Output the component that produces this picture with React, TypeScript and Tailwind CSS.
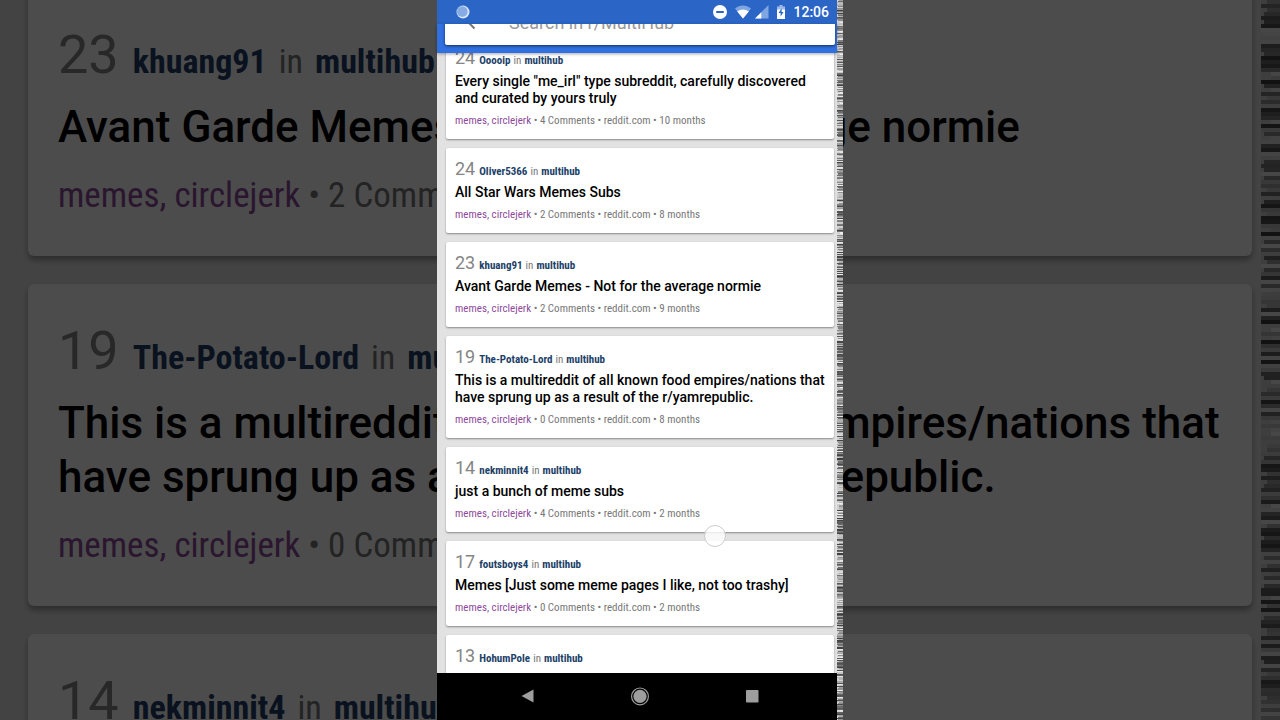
import React from 'react';
import clsx from 'clsx';

type Post = {
  id: number;
  score: number;
  author: string;
  title: string;
  comments: number;
  age: string;
};

const posts: Post[] = [
  { id: 1, score: 24, author: 'Ooooip', title: 'Every single "me_irl" type subreddit, carefully discovered and curated by yours truly', comments: 4, age: '10 months' },
  { id: 2, score: 24, author: 'Oliver5366', title: 'All Star Wars Memes Subs', comments: 2, age: '8 months' },
  { id: 3, score: 23, author: 'khuang91', title: 'Avant Garde Memes - Not for the average normie', comments: 2, age: '9 months' },
  { id: 4, score: 19, author: 'The-Potato-Lord', title: 'This is a multireddit of all known food empires/nations that have sprung up as a result of the r/yamrepublic.', comments: 0, age: '8 months' },
  { id: 5, score: 14, author: 'nekminnit4', title: 'just a bunch of meme subs', comments: 4, age: '2 months' },
  { id: 6, score: 17, author: 'foutsboys4', title: 'Memes [Just some meme pages I like, not too trashy]', comments: 0, age: '2 months' },
  { id: 7, score: 13, author: 'HohumPole', title: '', comments: 0, age: '' },
];

const narrow = "font-['Roboto_Condensed','Liberation_Sans_Narrow',Roboto,sans-serif]";

const PostCard: React.FC<{ post: Post; large?: boolean }> = ({ post, large }) => (
  <article
    className={clsx(
      'shrink-0 bg-white',
      large
        ? 'min-h-[268px] rounded-md pt-8 pr-6 pb-9 pl-[30px] shadow-[0_4px_6px_rgba(0,0,0,0.35)]'
        : 'min-h-[85px] rounded-xs px-[9px] pt-2.5 pb-[11px] shadow-[0_1px_2px_rgba(0,0,0,0.4)]'
    )}
  >
    <div className={clsx('flex items-baseline whitespace-nowrap', large ? 'h-[70px] gap-3.5 leading-[70px]' : 'h-[22px] gap-1 leading-[22px]')}>
      <span className={clsx('text-[#858585]', large ? 'text-[54px]' : 'text-[18px]')}>{post.score}</span>
      <span className={clsx(narrow, 'flex items-baseline text-[#777]', large ? 'gap-3 text-[34px]' : 'gap-[3px] text-[11px]')}>
        <b className="text-[#223f68]">{post.author}</b>
        <span>in</span>
        <b className="text-[#223f68]">multihub</b>
      </span>
    </div>
    {post.title && (
      <>
        <h2 className={clsx('font-medium text-black', large ? 'mt-2.5 text-[44px] leading-[54px]' : 'mt-1 text-[14px] leading-[17px]')}>
          {post.title}
        </h2>
        <p className={clsx(narrow, 'whitespace-nowrap text-[#777]', large ? 'mt-[18px] text-[35px] leading-[48px]' : 'mt-1.5 text-[11px] leading-[15px]')}>
          <span className="text-[#8e4a9a]">memes, circlejerk</span> • {post.comments} Comments • reddit.com • {post.age}
        </p>
      </>
    )}
  </article>
);

// Torn column of horizontal scan lines along the edge of the recording
const Static: React.FC<{ className: string; step: number }> = ({ className, step }) => {
  const bars = Array.from({ length: Math.ceil(720 / step) }, (_, i) => {
    const n = Math.abs(Math.sin(i * 12.9898 + step) * 43758.5453) % 1;
    const m = Math.abs(Math.sin(i * 78.233 + step) * 12543.123) % 1;
    return { y: i * step, x: m > 0.6 ? Math.floor(n * 4) : 0, shade: Math.floor(n * 180 + 60) };
  });
  return (
    <svg className={className} viewBox="0 0 6 720" preserveAspectRatio="none" shapeRendering="crispEdges" aria-hidden="true">
      <rect width="6" height="720" fill="#d0d0d0" />
      {bars.map((b) => (
        <rect key={b.y} x={b.x} y={b.y} width={6 - b.x} height={step} fill={`rgb(${b.shade},${b.shade},${b.shade})`} />
      ))}
    </svg>
  );
};

const StatusBar: React.FC = () => (
  <div className="flex h-6 shrink-0 items-center bg-[#2b66c7] pr-2 pl-[19px] text-white">
    <svg className="h-3.5 w-3.5" viewBox="0 0 14 14" aria-hidden="true">
      <circle cx="7" cy="7" r="6.5" fill="#d9e6f8" />
      <circle cx="6.3" cy="6.5" r="5.3" fill="#86abe4" />
    </svg>
    <svg className="ml-auto h-3.5 w-3.5" viewBox="0 0 14 14" aria-hidden="true">
      <circle cx="7" cy="7" r="7" fill="#fff" />
      <rect x="3.2" y="6" width="7.6" height="2" fill="#2b66c7" />
    </svg>
    <svg className="ml-2 h-3.5 w-4" viewBox="0 0 16 14" aria-hidden="true">
      <path d="M0 3.6C4.7-.4 11.3-.4 16 3.6L8 13.5z" fill="#7fa6e2" />
      <path d="M2.2 6.6c3.4-2.8 8.2-2.8 11.6 0L8 13.5z" fill="#fff" />
    </svg>
    <svg className="ml-1 h-3.5 w-3.5" viewBox="0 0 14 14" aria-hidden="true">
      <path d="M13.5 0v13.5H0z" fill="#7fa6e2" />
      <path d="M6.3 7.2v6.3H0z" fill="#fff" />
    </svg>
    <svg className="ml-2 h-3.5 w-2" viewBox="0 0 8 14" aria-hidden="true">
      <path d="M2.5 0h3v1.5H8V5H0V1.5h2.5z" fill="#9dbbea" />
      <path d="M0 4.5h8V14H0z" fill="#fff" />
      <path d="M4.6 3.2 1.6 8h2v3.6L6.6 7h-2z" fill="#2b66c7" />
    </svg>
    <span className="ml-2 text-[14px] leading-6 font-medium">12:06</span>
  </div>
);

const SearchBar: React.FC = () => (
  <div className="z-10 h-[29px] shrink-0 overflow-hidden bg-[#3070e0] pr-0.5 pl-2 shadow-[0_1px_3px_rgba(0,0,0,0.35)]">
    <form className="-mt-[27px] flex h-12 items-center rounded-xs bg-white pl-4 shadow-[0_1px_3px_rgba(0,0,0,0.6)]">
      <button type="button" aria-label="Back" className="text-[#777]">
        <svg className="h-6 w-6" viewBox="0 0 24 24" fill="none" stroke="currentColor" strokeWidth="2">
          <path d="M20 11H5M12.5 3.5 5 11l8.5 8.5" />
        </svg>
      </button>
      <input
        type="text"
        aria-label="Search"
        placeholder="Search in r/MultiHub"
        className="ml-6 h-12 min-w-0 flex-1 bg-transparent pt-0.5 text-[18px] outline-none placeholder:text-[#999]"
      />
    </form>
  </div>
);

const NavBar: React.FC = () => (
  <nav className="flex h-[47px] shrink-0 items-center justify-center gap-22 bg-black pl-1.5 text-[#9e9e9e]">
    <button type="button" aria-label="Back">
      <svg className="h-6 w-6" viewBox="0 0 24 24" fill="currentColor">
        <path d="M17.5 4.5v13l-12-6.5z" />
      </svg>
    </button>
    <button type="button" aria-label="Home">
      <svg className="h-6 w-6" viewBox="0 0 24 24" fill="currentColor">
        <circle cx="12" cy="11.4" r="6.6" />
        <circle cx="12" cy="11.4" r="8.4" fill="none" stroke="currentColor" strokeWidth="1.2" />
      </svg>
    </button>
    <button type="button" aria-label="Recent apps">
      <svg className="h-6 w-6" viewBox="0 0 24 24" fill="currentColor">
        <rect x="6" y="5" width="12.5" height="12.5" rx=".8" />
      </svg>
    </button>
  </nav>
);

const App: React.FC = () => (
  <div className="relative flex h-screen justify-center overflow-hidden bg-black font-[Roboto,sans-serif]">
    {/* Dimmed enlargement behind the phone */}
    <div className="absolute inset-0 flex overflow-hidden bg-[#e2e2e2]" aria-hidden="true">
      <div className="-mt-3 flex min-w-0 flex-1 flex-col gap-7 pr-[9px] pl-7">
        {posts.slice(2, 5).map((p) => (
          <PostCard key={p.id} post={p} large />
        ))}
      </div>
      <Static className="h-full w-[19px] shrink-0" step={4} />
      <div className="absolute inset-0 bg-black/70" />
    </div>

    {/* Phone */}
    <div className="relative flex h-full w-full max-w-[406px]">
      <div className="flex min-w-0 flex-1 flex-col">
        <StatusBar />
        <SearchBar />
        <main className="relative min-h-0 flex-1 overflow-hidden bg-[#e2e2e2]">
          <div className="-mt-4 flex flex-col gap-[9px] pr-[3px] pl-[9px]">
            {posts.map((p) => (
              <PostCard key={p.id} post={p} />
            ))}
          </div>
          {/* Touch indicator */}
          <span className="absolute top-[472px] left-[267px] h-[22px] w-[22px] rounded-full border border-[#ccc] bg-white/80" />
        </main>
        <NavBar />
      </div>
      <Static className="h-full w-1.5 shrink-0" step={1} />
    </div>
  </div>
);

export default App;
